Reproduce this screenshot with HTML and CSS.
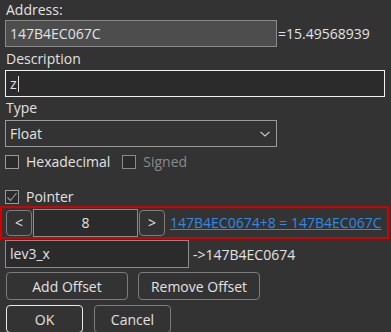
FILE: index.html
```html
<!DOCTYPE html>
<html>
<head>
<meta charset="utf-8">
<link rel="stylesheet" href="styles.css">
</head>
<body>
<div class="form">
  <div class="lbl lbl-first">Address:</div>
  <div class="row">
    <div class="field field-addr">147B4EC067C</div>
    <div class="value">=15.49568939</div>
  </div>
  <div class="lbl lbl-desc">Description</div>
  <div class="field field-desc">z<span class="caret"></span></div>
  <div class="lbl lbl-type">Type</div>
  <div class="select">
    <span>Float</span>
    <svg class="chev" width="10" height="6" viewBox="0 0 10 6"><path d="M0.5 0.8 L5 5 L9.5 0.8" fill="none" stroke="#d0d0d0" stroke-width="1.1"/></svg>
  </div>
  <div class="checks">
    <label class="chk"><span class="box"></span><span>Hexadecimal</span></label>
    <label class="chk chk-dis"><span class="box"></span><span>Signed</span></label>
  </div>
  <label class="chk chk-ptr"><span class="box"><svg width="14" height="14" viewBox="0 0 14 14"><path d="M2.5 7.5 L5.5 10.5 L11.5 3" fill="none" stroke="#a0a0a0" stroke-width="1.1"/></svg></span><span>Pointer</span></label>
</div>
<div class="ptrbox">
  <div class="btn btn-sq">&lt;</div>
  <div class="field field-off">8</div>
  <div class="btn btn-sq">&gt;</div>
  <a class="link">147B4EC0674+8 = 147B4EC067C</a>
</div>
<div class="form">
  <div class="row row-lev">
    <div class="field field-lev">lev3_x</div>
    <div class="value">-&gt;147B4EC0674</div>
  </div>
  <div class="row row-btns">
    <div class="btn btn-wide">Add Offset</div>
    <div class="btn btn-wide">Remove Offset</div>
  </div>
  <div class="row row-ok">
    <div class="btn btn-ok">OK</div>
    <div class="btn btn-cancel">Cancel</div>
  </div>
</div>
</body>
</html>
```
FILE: styles.css
```css
html, body {
  margin: 0;
  padding: 0;
  background: #333333;
  width: 391px;
  height: 332px;
  overflow: hidden;
}
body {
  font-family: "Open Sans", "Noto Sans", sans-serif;
  font-size: 14px;
  color: #e2e2e2;
}
.form {
  padding-left: 5px;
  display: flex;
  flex-direction: column;
  align-items: flex-start;
}
.lbl {
  line-height: 20px;
  height: 20px;
}
.lbl-first { height: 20px; padding-left: 1px; }
.lbl-desc { height: 23px; line-height: 24px; padding-left: 1px; }
.lbl-type { height: 23px; line-height: 22px; padding-left: 1px; }
.row {
  display: flex;
  align-items: center;
}
.field {
  box-sizing: border-box;
  height: 27px;
  border: 1px solid #8c8c8c;
  background: #2b2b2b;
  padding-left: 4px;
  line-height: 25px;
  color: #e2e2e2;
}
.field-addr {
  width: 272px;
  background: #4d4d4d;
  border-color: #8a8a8a;
}
.value {
  padding-left: 1px;
}
.field-desc {
  width: 380px;
  border-color: #f2f2f2;
  display: flex;
  align-items: center;
}
.caret {
  display: inline-block;
  width: 1px;
  height: 16px;
  background: #e2e2e2;
  margin-left: 1px;
}
.select {
  box-sizing: border-box;
  width: 272px;
  height: 27px;
  border: 1px solid #9a9a9a;
  display: flex;
  align-items: center;
  justify-content: space-between;
  padding: 0 6px 0 4px;
}
.chev { margin-top: 1px; }
.checks {
  display: flex;
  margin-top: 8px;
  gap: 0;
}
.chk {
  display: flex;
  align-items: center;
  height: 14px;
  line-height: 14px;
}
.box {
  box-sizing: border-box;
  width: 14px;
  height: 14px;
  border: 1px solid #9a9a9a;
  background: #2b2b2b;
  margin-right: 7px;
  display: flex;
}
.box svg { margin: -1px; }
.chk-dis { margin-left: 12px; color: #8a8a8a; }
.chk-dis .box { border-color: #8a8a8a; }
.chk-ptr { margin-top: 21px; }
.ptrbox {
  box-sizing: border-box;
  margin-top: 2px;
  width: 389px;
  height: 33px;
  border: 2px solid #d20000;
  display: flex;
  align-items: center;
  padding-left: 4px;
}
.btn {
  box-sizing: border-box;
  border: 1px solid #7c7c7c;
  border-radius: 4px;
  display: flex;
  align-items: center;
  justify-content: center;
  color: #e2e2e2;
}
.btn-sq {
  width: 26px;
  height: 26px;
  font-size: 14px;
}
.field-off {
  width: 105px;
  height: 28px;
  text-align: center;
  padding: 0;
  line-height: 26px;
  margin: 0 1px;
}
.link {
  color: #2e8ae6;
  text-decoration: underline;
  margin-left: 5px;
  white-space: nowrap;
}
.row-lev { margin-top: 1px; }
.field-lev {
  width: 184px;
  height: 28px;
}
.row-lev .value { padding-left: 4px; }
.row-btns {
  margin-top: 4px;
  gap: 10px;
}
.btn-wide {
  width: 122px;
  height: 28px;
}
.row-btns .btn-wide:first-child { margin-left: 1px; }
.row-ok {
  margin-top: 5px;
  gap: 11px;
}
.btn-ok {
  margin-left: 1px;
  width: 77px;
  height: 28px;
  border-color: #e8e8e8;
}
.btn-cancel {
  width: 77px;
  height: 28px;
}
```
